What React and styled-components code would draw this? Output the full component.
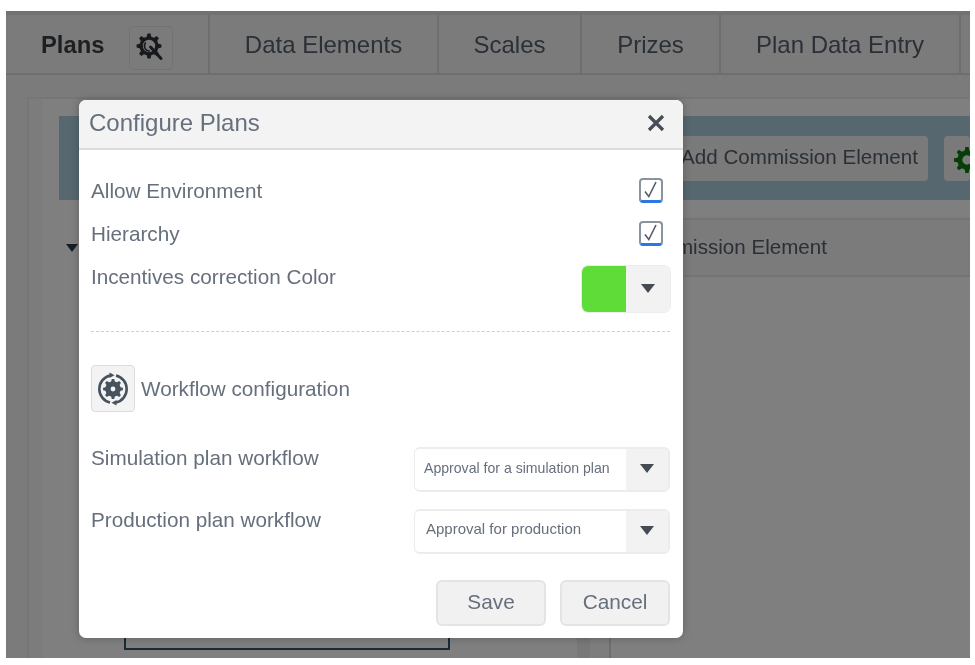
import React from "react";
import styled, { createGlobalStyle } from "styled-components";

const GlobalStyle = createGlobalStyle`
  html, body { margin: 0; padding: 0; background: #fff; }
  body { font-family: "Liberation Sans", Arial, sans-serif; color: #5b6472; }
`;

// builds a cog outline, teeth count and radii vary from icon to icon
function gearPath(cx, cy, outer, inner, hole, teeth) {
  const points = [];
  const step = (Math.PI * 2) / teeth;
  for (let i = 0; i < teeth; i++) {
    const a = i * step - Math.PI / 2;
    const w = step * 0.2;
    const pt = (r, ang) =>
      `${(cx + r * Math.cos(ang)).toFixed(2)} ${(cy + r * Math.sin(ang)).toFixed(2)}`;
    points.push(pt(inner, a - w * 1.5), pt(outer, a - w * 0.8), pt(outer, a + w * 0.8), pt(inner, a + w * 1.5));
  }
  const ring = `M${cx - hole} ${cy}a${hole} ${hole} 0 1 0 ${hole * 2} 0a${hole} ${hole} 0 1 0 ${-hole * 2} 0Z`;
  return `M${points.join("L")}Z${ring}`;
}

function SearchGear() {
  return (
    <svg width="30" height="30" viewBox="0 0 30 30" fill="none">
      <path d={gearPath(13, 13, 12.5, 9.6, 6.2, 8)} fill="#2e3338" fillRule="evenodd" />
      <path d="M9.8 9.6A5 5 0 0 0 14 18" stroke="#2e3338" strokeWidth="1.5" />
      <path d="M14.5 14L25 25.5" stroke="#2e3338" strokeWidth="3" strokeLinecap="round" />
    </svg>
  );
}

function WorkflowGear() {
  return (
    <svg width="36" height="38" viewBox="0 0 36 38" fill="none">
      <path d={gearPath(18, 19, 10, 7.8, 2.4, 8)} fill="#46535f" fillRule="evenodd" />
      <path d="M15 5.4A14 14 0 0 0 15 32.6" stroke="#46535f" strokeWidth="2.6" />
      <path d="M21 32.6A14 14 0 0 0 21 5.4" stroke="#46535f" strokeWidth="2.6" />
      <path d="M14.5 2.4L19.5 5.2L14.5 8Z" fill="#46535f" />
      <path d="M21.5 30L16.5 32.8L21.5 35.6Z" fill="#46535f" />
    </svg>
  );
}

const Shot = styled.div`
  position: relative;
  width: 964px;
  height: 647px;
  margin: 11px 0 0 6px;
  overflow: hidden;
  background: #f7f7f7;
  filter: blur(0.4px);
`;

const TabBar = styled.div`
  display: flex;
  height: 58px;
  align-items: stretch;
  border-top: 4px solid #e4e4e4;
  border-bottom: 2px solid #dcdcdc;
`;

const Brand = styled.div`
  display: flex;
  align-items: center;
  width: 167px;
  padding: 0 0 0 35px;
`;

const BrandName = styled.span`
  width: 88px;
  padding-top: 2px;
  font-size: 23.8px;
  font-weight: 700;
  color: #3a3f45;
`;

const IconButton = styled.div`
  display: flex;
  align-items: center;
  justify-content: center;
  width: 44px;
  height: 44px;
  margin-top: ${(p) => p.$top || 0}px;
  box-sizing: border-box;
  border: 1px solid #e4e4e4;
  border-radius: 4px;
  background: #f6f6f6;
`;

const Tab = styled.div`
  display: flex;
  align-items: center;
  justify-content: center;
  width: ${(p) => p.$w}px;
  flex: none;
  padding-top: 2px;
  box-sizing: border-box;
  border-left: 2px solid #dcdcdc;
  font-size: 24px;
  color: #55606c;
`;

const Content = styled.div`
  display: flex;
  margin: 22px 0 0 21px;
  height: 560px;
  border-top: 2px solid #ececec;
  border-left: 2px solid #ececec;
  background: linear-gradient(to right, #f9f9f9 14px, #fff 14px);
`;

const LeftPanel = styled.div`
  width: 530px;
  flex: none;
  padding: 17px 0 0 30px;
  box-sizing: border-box;
`;

const Toolbar = styled.div`
  display: flex;
  align-items: center;
  justify-content: flex-end;
  gap: 16px;
  width: 911px;
  height: 84px;
  box-sizing: border-box;
  background: #afcfe0;
  margin-bottom: 18px;
`;

const ToolButton = styled.div`
  display: flex;
  align-items: center;
  height: 45px;
  padding: 0 10px 3px;
  box-sizing: border-box;
  border-radius: 4px;
  background: #f4f4f4;
  font-size: 20.6px;
  color: #55606c;
`;

const GearSlot = styled(ToolButton)`
  width: 26px;
  overflow: hidden;
  padding: 3px 0 0 9px;
`;

const TreeRow = styled.div`
  display: flex;
  align-items: center;
  width: 361px;
  height: 59px;
  margin-left: 550px;
  border-top: 2px solid #e8e8e8;
  border-bottom: 2px solid #e8e8e8;
  box-sizing: border-box;
  justify-content: flex-end;
  padding: 0 143px 2px 0;
  background: #f7f7f7;
  font-size: 20.6px;
  color: #55606c;
`;

const Caret = styled.div`
  position: absolute;
  left: 60px;
  top: 233px;
  width: 0;
  height: 0;
  border-left: 6px solid transparent;
  border-right: 6px solid transparent;
  border-top: 8px solid #2a3a4a;
`;

const NodeBox = styled.div`
  position: absolute;
  left: 118px;
  top: 560px;
  width: 326px;
  height: 79px;
  box-sizing: border-box;
  border: 2px solid #2f5770;
`;

const Divider = styled.div`
  position: absolute;
  left: 571px;
  top: 266px;
  bottom: 0;
  width: 34px;
  box-sizing: border-box;
  border-right: 2px solid #dcdcdc;
  background: linear-gradient(to right, #f1f1f1 13px, #fbfbfb 13px);
`;

const Scrim = styled.div`
  position: absolute;
  inset: 0;
  background: rgba(0, 0, 0, 0.5);
`;

const Modal = styled.div`
  position: absolute;
  left: 73px;
  top: 89px;
  width: 604px;
  height: 538px;
  border-radius: 7px;
  background: #fff;
  overflow: hidden;
  box-shadow: 0 0 8px rgba(0, 0, 0, 0.25);
`;

const ModalHeader = styled.div`
  display: flex;
  align-items: center;
  justify-content: space-between;
  height: 50px;
  padding: 0 18px 2px 10px;
  box-sizing: border-box;
  background: #f3f3f3;
  border-bottom: 2px solid #dcdcdc;
  font-size: 24px;
  color: #666f7c;
`;

const ModalBody = styled.div`
  padding: 30px 13px 0 12px;
`;

const FormRow = styled.div`
  display: flex;
  justify-content: space-between;
  align-items: flex-start;
  font-size: 20.7px;
  line-height: 22px;
  color: #666f7c;
  height: ${(p) => p.$h}px;
`;

const Check = styled.div`
  display: flex;
  align-items: center;
  justify-content: center;
  width: 24px;
  height: 25px;
  margin: -2px 7px 0 0;
  box-sizing: border-box;
  border: 2px solid #8a93a0;
  border-bottom: 3px solid #2a78e0;
  border-radius: 4px;
  background: #fff;
`;

const ColorPick = styled.div`
  display: flex;
  width: 88px;
  height: 46px;
  border-radius: 6px;
  overflow: hidden;
  box-shadow: 0 0 0 1px #ececec;
`;

const Swatch = styled.div`
  width: 44px;
  background: #5fdc37;
`;

const ArrowCell = styled.div`
  display: flex;
  flex: 1;
  align-items: center;
  justify-content: center;
  padding-bottom: 2px;
  background: #f2f2f2;
`;

const Arrow = styled.div`
  width: 0;
  height: 0;
  border-left: 7px solid transparent;
  border-right: 7px solid transparent;
  border-top: 9px solid #454b52;
`;

const Dashed = styled.div`
  margin-top: 19px;
  border-top: 1px dashed #cfcfcf;
`;

const WorkflowHead = styled.div`
  display: flex;
  align-items: center;
  gap: 6px;
  margin: 33px 0 35px;
  padding-bottom: 0;
  font-size: 20.7px;
  line-height: 22px;
  color: #666f7c;
`;

const WorkflowIcon = styled(IconButton)`
  height: 47px;
  border-color: #dcdcdc;
  background: #f3f3f3;
`;

const SelectRow = styled.div`
  display: flex;
  justify-content: space-between;
  height: 62px;
  font-size: 20.7px;
  line-height: 22px;
  color: #666f7c;
`;

const SelectBox = styled.div`
  display: flex;
  width: 256px;
  height: 45px;
  box-sizing: border-box;
  border-radius: 6px;
  overflow: hidden;
  border: 2px solid #ececec;
  border-left-width: 1px;
`;

const SelectText = styled.div`
  display: flex;
  align-items: center;
  width: 211px;
  flex: none;
  padding: 0 0 ${(p) => p.$lift}px ${(p) => p.$pad}px;
  box-sizing: border-box;
  background: #fff;
  white-space: nowrap;
  font-size: ${(p) => p.$size}px;
`;

const Footer = styled.div`
  display: flex;
  justify-content: flex-end;
  gap: 14px;
  margin-top: 9px;
`;

const FooterButton = styled.div`
  display: flex;
  align-items: center;
  justify-content: center;
  width: 110px;
  height: 46px;
  padding-bottom: 2px;
  box-sizing: border-box;
  border: 2px solid #e4e4e4;
  border-radius: 6px;
  background: #f1f1f1;
  font-size: 20.8px;
  color: #666f7c;
`;

const CheckMark = () => (
  <svg width="20" height="20" viewBox="0 0 20 20" fill="none">
    <path d="M4 11.5L7.8 16.5L15 2" stroke="#555e6a" strokeWidth="1.6" />
  </svg>
);

const CloseIcon = () => (
  <svg width="18" height="18" viewBox="0 0 18 18">
    <path d="M2 2L16 16M16 2L2 16" stroke="#454d57" strokeWidth="3.2" />
  </svg>
);

function App() {
  return (
    <>
      <GlobalStyle />
      <Shot>
        <TabBar>
          <Brand>
            <BrandName>Plans</BrandName>
            <IconButton $top={7}>
              <SearchGear />
            </IconButton>
          </Brand>
          <Tab $w={229}>Data Elements</Tab>
          <Tab $w={143}>Scales</Tab>
          <Tab $w={139}>Prizes</Tab>
          <Tab $w={240}>Plan Data Entry</Tab>
          <Tab $w={10} />
        </TabBar>
        <Content>
          <LeftPanel>
            <Toolbar>
              <ToolButton>Add Commission Element</ToolButton>
              <GearSlot>
                <svg width="28" height="28" viewBox="0 0 30 30" style={{ flex: "none" }}>
                  <path d={gearPath(15, 15, 14, 10.5, 5, 8)} fill="#0e7d0e" fillRule="evenodd" />
                </svg>
              </GearSlot>
            </Toolbar>
            <TreeRow>Commission Element</TreeRow>
          </LeftPanel>
        </Content>
        <Caret />
        <Divider />
        <NodeBox />
        <Scrim />
        <Modal>
          <ModalHeader>
            Configure Plans
            <CloseIcon />
          </ModalHeader>
          <ModalBody>
            <FormRow $h={43}>
              Allow Environment
              <Check>
                <CheckMark />
              </Check>
            </FormRow>
            <FormRow $h={43}>
              Hierarchy
              <Check>
                <CheckMark />
              </Check>
            </FormRow>
            <FormRow $h={46}>
              Incentives correction Color
              <ColorPick>
                <Swatch />
                <ArrowCell>
                  <Arrow />
                </ArrowCell>
              </ColorPick>
            </FormRow>
            <Dashed />
            <WorkflowHead>
              <WorkflowIcon>
                <WorkflowGear />
              </WorkflowIcon>
              Workflow configuration
            </WorkflowHead>
            <SelectRow>
              Simulation plan workflow
              <SelectBox>
                <SelectText $pad={9} $size={14.1} $lift={3}>Approval for a simulation plan</SelectText>
                <ArrowCell>
                  <Arrow />
                </ArrowCell>
              </SelectBox>
            </SelectRow>
            <SelectRow>
              Production plan workflow
              <SelectBox>
                <SelectText $pad={11} $size={15} $lift={6}>Approval for production</SelectText>
                <ArrowCell>
                  <Arrow />
                </ArrowCell>
              </SelectBox>
            </SelectRow>
            <Footer>
              <FooterButton>Save</FooterButton>
              <FooterButton>Cancel</FooterButton>
            </Footer>
          </ModalBody>
        </Modal>
      </Shot>
    </>
  );
}

export default App;
